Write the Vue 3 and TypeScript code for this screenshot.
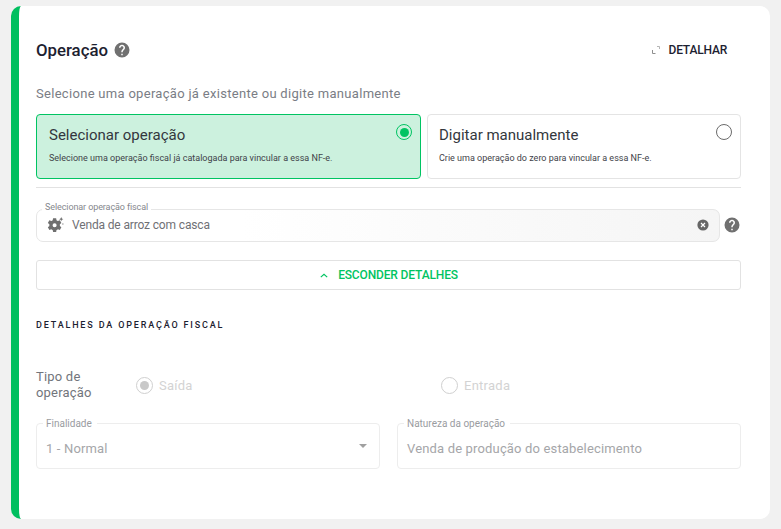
<script setup lang="ts">
const helpPath = 'M12 2a10 10 0 1 0 0 20 10 10 0 0 0 0-20zm1 17h-2v-2h2v2zm2.07-7.75-.9.92C13.45 12.9 13 13.5 13 15h-2v-.5c0-1.1.45-2.1 1.17-2.83l1.24-1.26c.37-.36.59-.86.59-1.41 0-1.1-.9-2-2-2s-2 .9-2 2H8c0-2.21 1.79-4 4-4s4 1.79 4 4c0 .88-.36 1.68-.93 2.25z'
</script>

<template>
  <main class="card">
    <header class="head">
      <div class="title-wrap">
        <h1 class="title">Operação</h1>
        <svg class="help" viewBox="0 0 24 24" width="18" height="18"><path :d="helpPath" /></svg>
      </div>
      <button class="detail" type="button">
        <svg viewBox="0 0 8 8" width="8" height="8" class="expand">
          <path d="M.5 4v3.5H3.5" fill="none" stroke="#8f8f8f" stroke-width="1" />
          <path d="M5 .5h2.5V3" fill="none" stroke="#b5b5b5" stroke-width="1" />
        </svg>
        DETALHAR
      </button>
    </header>

    <p class="lead">Selecione uma operação já existente ou digite manualmente</p>

    <div class="options">
      <div class="option active">
        <div class="option-title">Selecionar operação</div>
        <div class="option-desc">Selecione uma operação fiscal já catalogada para vincular a essa NF-e.</div>
        <span class="radio on"><i></i></span>
      </div>
      <div class="option second">
        <div class="option-title">Digitar manualmente</div>
        <div class="option-desc">Crie uma operação do zero para vincular a essa NF-e.</div>
        <span class="radio"></span>
      </div>
    </div>

    <hr class="rule" />

    <div class="select-row">
      <fieldset class="field filled">
        <legend>Selecionar operação fiscal</legend>
        <svg class="gear" viewBox="0 0 16 15" width="17" height="16">
          <path transform="translate(-1 -1.9) scale(1.2)" fill="#6f6f6f" fill-rule="evenodd" d="M5.6 2.6h2.4l.3 1.5c.4.2.8.4 1.1.6l1.5-.5 1.2 2.1-1.2 1c.1.4.1.9 0 1.3l1.2 1-1.2 2.1-1.5-.5c-.3.3-.7.5-1.1.6L8 13.4H5.6l-.3-1.6c-.4-.1-.8-.3-1.1-.6l-1.5.5L1.5 9.6l1.2-1c-.1-.4-.1-.9 0-1.3l-1.2-1 1.2-2.1 1.5.5c.3-.2.7-.4 1.1-.6zM6.8 6.4a1.6 1.6 0 1 0 0 3.2 1.6 1.6 0 0 0 0-3.2z" />
          <path fill="#6f6f6f" d="M13.4 0l.6 1.4 1.4.6-1.4.6-.6 1.4-.6-1.4-1.4-.6 1.4-.6zM15 5.6l.3.7.7.3-.7.3-.3.7-.3-.7-.7-.3.7-.3z" />
        </svg>
        <span class="value">Venda de arroz com casca</span>
        <svg class="clear" viewBox="0 0 12 12" width="12" height="12">
          <circle cx="6" cy="6" r="5.6" fill="#666" />
          <path d="M4 4l4 4M8 4l-4 4" stroke="#fff" stroke-width="1.2" />
        </svg>
      </fieldset>
      <svg class="help side" viewBox="0 0 24 24" width="18" height="18"><path :d="helpPath" /></svg>
    </div>

    <button class="toggle" type="button">
      <svg viewBox="0 0 10 6" width="8" height="5"><path d="M1 5l4-3.6L9 5" fill="none" stroke="#00c462" stroke-width="1.5" /></svg>
      ESCONDER DETALHES
    </button>

    <h2 class="section">DETALHES DA OPERAÇÃO FISCAL</h2>

    <div class="type-row">
      <div class="type-label">Tipo de operação</div>
      <label class="choice first"><span class="radio small on-gray"><i></i></span>Saída</label>
      <label class="choice"><span class="radio small off-gray"></span>Entrada</label>
    </div>

    <div class="fields">
      <fieldset class="field plain">
        <legend>Finalidade</legend>
        <span class="plain-value">1 - Normal</span>
        <span class="caret"></span>
      </fieldset>
      <fieldset class="field plain">
        <legend>Natureza da operação</legend>
        <span class="plain-value">Venda de produção do estabelecimento</span>
      </fieldset>
    </div>
  </main>
</template>

<style>
html, body { margin: 0; background: #f1f1f1; }
</style>

<style scoped>
* { box-sizing: border-box; }
.card {
  width: 759px;
  height: 513px;
  margin: 6px 0 0 11px;
  padding: 28px 29px 0 17px;
  background: #fff;
  border-left: 8px solid #00bf5f;
  border-radius: 10px;
  font-family: Roboto, sans-serif;
  color: #6f7279;
}
.head { display: flex; justify-content: space-between; align-items: center; height: 32px; }
.title-wrap { display: flex; align-items: center; gap: 5px; }
.title { margin: 0; font-size: 16.8px; font-weight: 500; color: #1c2130; }
.help { fill: #707070; display: block; }
.detail {
  display: flex; align-items: center; gap: 9px;
  margin-right: 14px; padding: 0; border: 0; background: none;
  font: 500 12px Roboto, sans-serif; letter-spacing: -.2px; color: #1c2130;
}
.lead { margin: 18px 0 0; font-size: 13px; line-height: 20px; letter-spacing: .3px; color: #7a7d85; }
.options { display: grid; grid-template-columns: 385px 314px; gap: 6px; margin-top: 10px; }
.option {
  position: relative; height: 65px; padding: 11px 12px 0;
  border: 1px solid #e4e4e4; border-radius: 4px; color: #3b3f46;
}
.option.second { padding-left: 11px; }
.option.active { background: #ccf1de; border-color: #00c462; }
.option-title { font-size: 15px; line-height: 18px; color: #33373d; }
.option-desc { margin-top: 8px; font-size: 9px; line-height: 12px; color: #3f4349; }
.radio {
  position: absolute; top: 9px; right: 8px; display: flex; align-items: center; justify-content: center;
  width: 16px; height: 16px; border: 1px solid #6b6b6b; border-radius: 50%; background: #fff;
}
.option.active .radio { border-color: #00c462; background: transparent; }
.radio i { width: 9px; height: 9px; border-radius: 50%; background: #00c462; }
.rule { height: 1px; margin: 8px 0 0; border: 0; background: #e2e2e2; }
.select-row { display: flex; gap: 3px; margin-top: 14px; align-items: flex-start; }
.field { margin: 0; min-width: 0; position: relative; display: flex; align-items: center; }
.field legend { font-size: 9px; line-height: 11px; padding: 0 3px; }
.filled {
  flex: none; width: 684px; height: 40px; padding: 0 9px 7px 10px;
  border: 1px solid #e6e6e6; border-radius: 7px;
  background: linear-gradient(90deg, #fff 30%, #f5f5f5 100%);
}
.filled legend { margin-left: -5px; padding-bottom: 3px; letter-spacing: -.1px; color: #85878d; }
.gear { flex: none; margin-right: 8px; }
.value { flex: 1; font-size: 12px; letter-spacing: -.15px; color: #6f7075; }
.clear { flex: none; margin-top: -1px; margin-left: -1px; margin-right: 1px; }
.side { margin-top: 14px; }
.toggle {
  display: flex; align-items: center; justify-content: center; gap: 10px;
  width: 705px; height: 30px; margin-top: 18px; padding: 0 0 0 1px;
  border: 1px solid #e2e2e2; border-radius: 3px; background: #fff;
  font: 500 12px Roboto, sans-serif; letter-spacing: -.15px; color: #00c462;
}
.section { margin: 30px 0 0; font-size: 9px; line-height: 11px; font-weight: 500; letter-spacing: 1.84px; color: #1c2130; }
.type-row { display: flex; align-items: center; margin-top: 38px; }
.type-label { width: 100px; font-size: 13px; line-height: 16px; letter-spacing: .2px; color: #72757c; }
.choice { display: flex; align-items: center; gap: 6px; font-size: 13px; letter-spacing: .25px; color: #d3d3d3; }
.choice.first { width: 305px; }
.radio.small { position: static; flex: none; width: 17px; height: 17px; background: #fff; border-color: #d0d0d0; }
.on-gray i { background: #c9c9c9; }
.fields { display: grid; grid-template-columns: 344px 344px; gap: 17px; margin-top: 17px; }
.plain { height: 51px; padding: 0 9px; border: 1px solid #ededed; border-radius: 4px; }
.plain legend { color: #9a9c9f; margin-left: -3px; padding: 0 5px 0 3px; font-size: 10px; }
.plain-value { flex: 1; font-size: 13px; letter-spacing: .16px; color: #a5a6a9; }
.caret {
  position: absolute; right: 12px; top: 15px;
  border: 4.5px solid transparent; border-top: 4px solid #a0a0a0; border-bottom: 0;
}
</style>
